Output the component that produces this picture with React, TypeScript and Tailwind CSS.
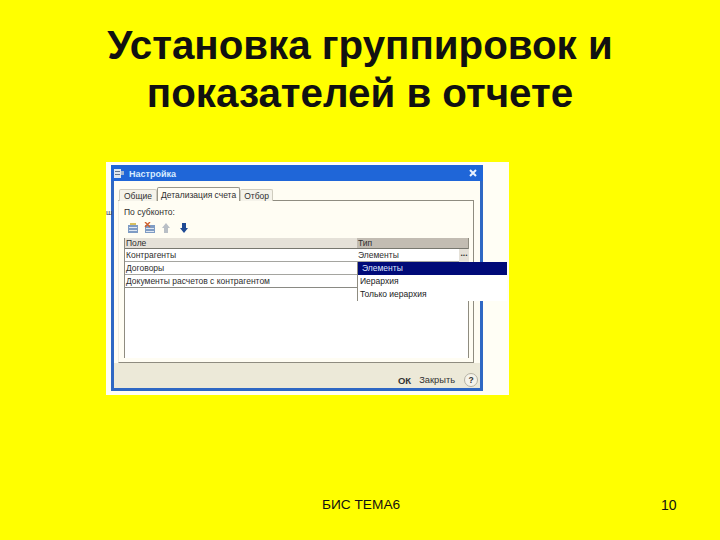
const fontArial = "font-['Liberation_Sans',Arial,sans-serif]";

function ToolbarIcons() {
  return (
    <div className="flex items-center gap-[5px] h-[16px] ml-[3px]">
      <svg width="12" height="12" viewBox="0 0 12 12">
        <rect x="1" y="3" width="10" height="8" fill="#7f9cc4" />
        <rect x="2" y="5" width="8" height="1" fill="#dfe7f2" />
        <rect x="2" y="8" width="8" height="1" fill="#dfe7f2" />
        <rect x="3" y="1" width="6" height="2" fill="#d8c060" />
      </svg>
      <svg width="12" height="12" viewBox="0 0 12 12">
        <rect x="1" y="3" width="10" height="8" fill="#7f9cc4" />
        <rect x="2" y="6" width="8" height="1" fill="#dfe7f2" />
        <rect x="2" y="9" width="8" height="1" fill="#dfe7f2" />
        <path d="M1 0 L6 5 M6 0 L1 5" stroke="#d0602c" strokeWidth="1.4" />
      </svg>
      <svg width="10" height="12" viewBox="0 0 10 12">
        <path d="M5 1 L9 6 H7 V11 H3 V6 H1 Z" fill="#b9bfc6" />
      </svg>
      <svg width="10" height="12" viewBox="0 0 10 12" className="ml-[3px]">
        <path d="M5 11 L9 6 H7 V1 H3 V6 H1 Z" fill="#1f4a94" />
      </svg>
    </div>
  );
}

function GridRow({ name, type, last }: { name: string; type?: string; last?: boolean }) {
  return (
    <div className={`flex h-[13px] items-center bg-white border-b ${last ? "border-[#8a8a84]" : "border-[#a5a5a0]"}`}>
      <div className="w-[232px] pl-[1px] whitespace-nowrap">{name}</div>
      {type && <div className="pl-[1px]">{type}</div>}
    </div>
  );
}

export default function App() {
  return (
    <div className={`relative w-[720px] h-[540px] overflow-hidden bg-[#ffff00] flex flex-col ${fontArial}`}>
      <h1 className="pt-[22px] h-[162px] text-center text-[40.3px] leading-[48px] font-bold text-[#111111] whitespace-nowrap">
        Установка группировок и
        <br />
        показателей в отчете
      </h1>

      {/* Скриншот диалога */}
      <div className="ml-[106px] w-[403px] h-[233px] bg-[#fffef5] pl-[5px] pt-[3px] relative">
        <span className="absolute left-[0px] top-[46px] text-[8px] leading-[10px] text-[#444]">ш</span>
        <div className="w-[372px] h-[226px] flex flex-col bg-[#2f68c4] px-[3px] pb-[3px] text-[8.5px] leading-[11px] text-[#2e2e2e]">
          <div className="h-[16px] shrink-0 flex items-center justify-between bg-[#1f66d8] -mx-[3px] px-[3px]">
            <div className="flex items-center gap-[4px]">
              <svg width="11" height="11" viewBox="0 0 11 11">
                <rect x="0" y="1" width="7" height="9" fill="#dfe6ef" />
                <rect x="1" y="3" width="5" height="1" fill="#64748b" />
                <rect x="1" y="6" width="5" height="1" fill="#64748b" />
                <rect x="7" y="3" width="3" height="4" fill="#9fb4d0" />
              </svg>
              <span className="text-[#d8ecff] font-bold text-[9px] pt-[3px]">Настройка</span>
            </div>
            <svg width="10" height="10" viewBox="0 0 10 10" className="mr-[2px]">
              <path d="M2 2 L8 8 M8 2 L2 8" stroke="#e8f2ff" strokeWidth="2" />
            </svg>
          </div>

          <div className="flex-1 flex flex-col bg-[#fffdf3]">
            <div className="px-[4px] pt-[6px] flex-1 flex flex-col">
              <div className="flex h-[14px] items-end pl-[1px] relative z-10">
                <div className="h-[12px] px-[4px] border border-b-0 border-[#cfccbe] rounded-t-[2px] bg-[#f5f3ea] pt-[1px]">Общие</div>
                <div className="h-[14px] px-[3px] border border-b-0 border-[#9a978a] rounded-t-[2px] bg-[#fffdf3] pt-[2px]">Детализация счета</div>
                <div className="h-[12px] px-[3px] border border-b-0 border-[#cfccbe] rounded-t-[2px] bg-[#f5f3ea] pt-[1px]">Отбор</div>
              </div>
              <div className="h-[163px] -mt-[1px] mr-[2px] border border-[#8f8c80] border-l-[#efede2] bg-[#fffdf3] pl-[5px] pr-[4px] pt-[6px] pb-[4px] flex flex-col">
                <div className="h-[11px]">По субконто:</div>
                <div className="mt-[2px]">
                  <ToolbarIcons />
                </div>
                <div className="mt-[2px] flex-1 border-l border-r border-[#8f8c80] bg-white">
                  <div className="flex h-[11px] items-center border-b border-[#77776f] bg-[#e5e1d8]">
                    <div className="w-[232px] pl-[1px]">Поле</div>
                    <div className="flex-1 pl-[1px] h-full bg-[#c2bcb2]">Тип</div>
                  </div>
                  <div className="relative">
                    <GridRow name="Контрагенты" type="Элементы" />
                    <GridRow name="Договоры" />
                    <GridRow name="Документы расчетов с контрагентом" last />
                    <div className="absolute left-[334px] top-0 w-[10px] h-[13px] bg-[#e5e1d8] text-center leading-[9px] font-bold">...</div>
                    {/* Выпадающий список */}
                    <div className="absolute left-[232px] top-[13px] w-[150px] h-[39px] bg-white border-l border-[#8f8c80]">
                      <div className="h-[13px] bg-[#000a78] text-[#dfe4ff] pl-[4px] leading-[13px]">Элементы</div>
                      <div className="h-[13px] pl-[2px] leading-[13px] text-[#222]">Иерархия</div>
                      <div className="h-[13px] pl-[2px] leading-[13px] text-[#222]">Только иерархия</div>
                    </div>
                  </div>
                </div>
              </div>
            </div>
            <div className="h-[25px] shrink-0 bg-[#ece9d8] flex items-end justify-end pr-[2px] pb-[1px] gap-[8px] text-[#333]">
              <span className="font-bold text-[9.5px] pb-[1px]">ОК</span>
              <span className="text-[9.3px] pb-[1px] mr-[1px]">Закрыть</span>
              <span className="w-[14px] h-[14px] rounded-full border border-[#b5b2a4] bg-[#f5f3ea] text-center leading-[12px] font-bold">?</span>
            </div>
          </div>
        </div>
      </div>

      <div className="mt-[100px] flex items-center text-[14px] leading-[20px] text-[#111111]">
        <div className="ml-[322px] w-[339px] text-[13.7px]">БИС ТЕМА6</div>
        <div>10</div>
      </div>
    </div>
  );
}
